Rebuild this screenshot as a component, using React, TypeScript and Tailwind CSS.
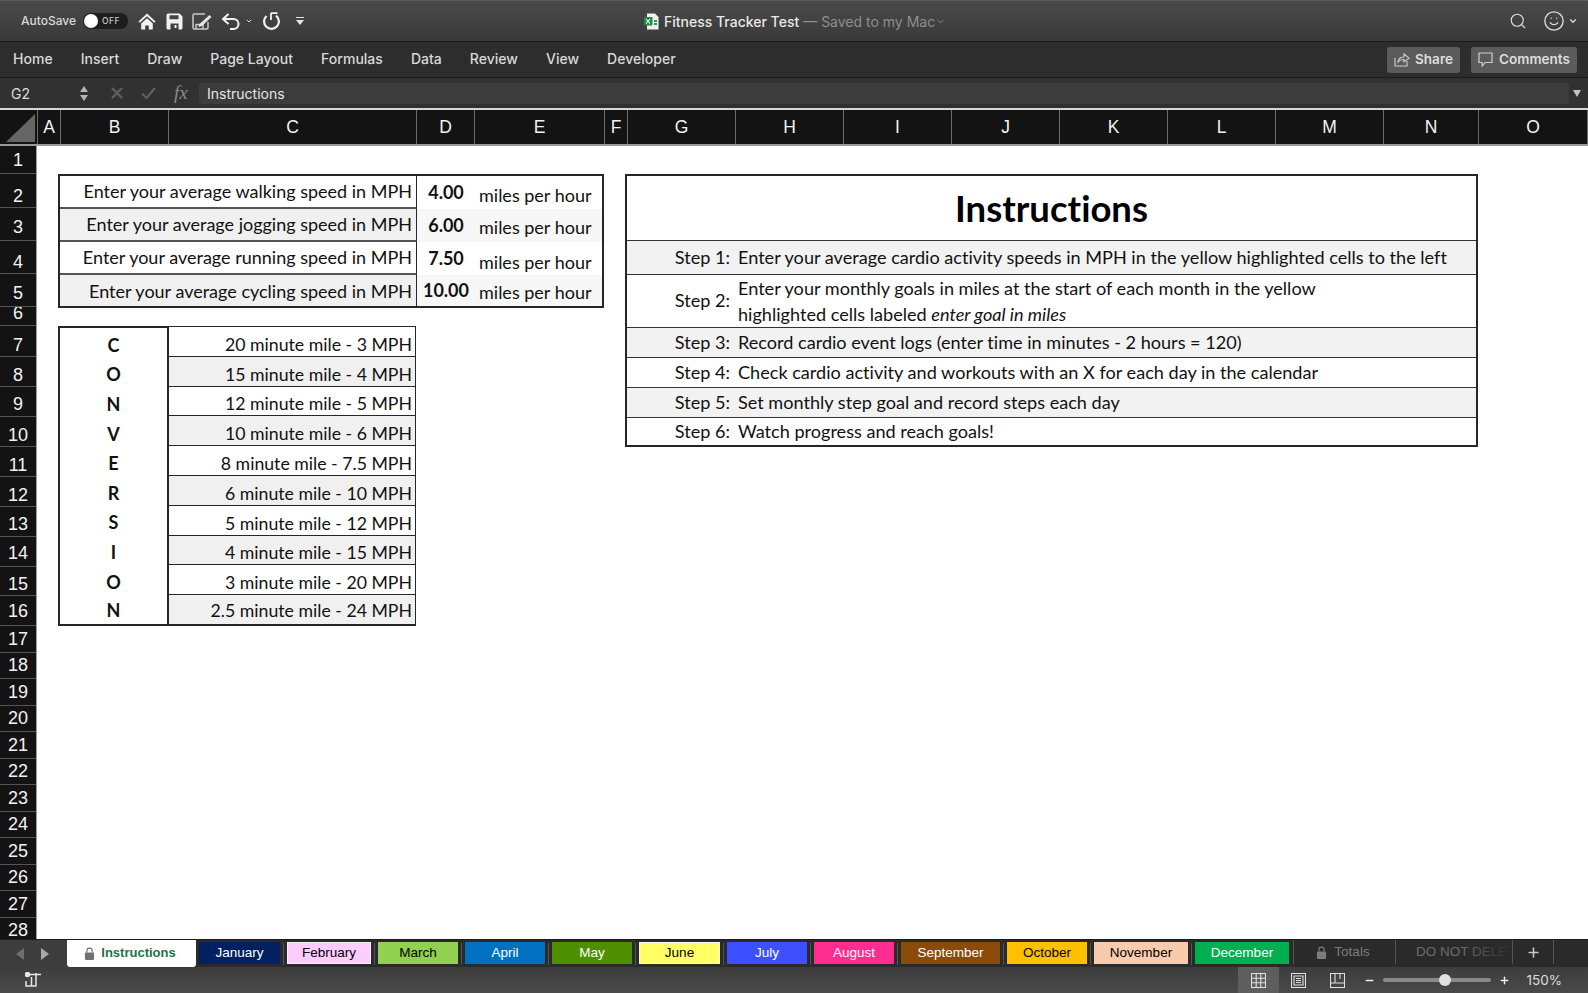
import { Search, Smile, ChevronDown, Plus, Minus } from 'lucide-react'

const cellFont = "font-['Lato','Liberation_Sans',sans-serif] [font-variant-ligatures:none]"
const uiFont = "font-['Inter','Liberation_Sans',sans-serif]"

const menus = ['Home', 'Insert', 'Draw', 'Page Layout', 'Formulas', 'Data', 'Review', 'View', 'Developer']

const columns = [
  { name: 'A', w: 'w-[23px]' },
  { name: 'B', w: 'w-[108px]' },
  { name: 'C', w: 'w-[248px]' },
  { name: 'D', w: 'w-[58px]' },
  { name: 'E', w: 'w-[130px]' },
  { name: 'F', w: 'w-[23px]' },
  { name: 'G', w: 'w-[108px]' },
  { name: 'H', w: 'w-[108px]' },
  { name: 'I', w: 'w-[108px]' },
  { name: 'J', w: 'w-[108px]' },
  { name: 'K', w: 'w-[108px]' },
  { name: 'L', w: 'w-[108px]' },
  { name: 'M', w: 'w-[108px]' },
  { name: 'N', w: 'w-[95px]' },
  { name: 'O', w: 'w-[109px]' },
]

const rows = [
  { n: 1, c: 'h-[28px] pt-[2px]' },
  { n: 2, c: 'h-[34px] pt-[12px]' },
  { n: 3, c: 'h-[33px] pt-[7px]' },
  { n: 4, c: 'h-[33px] pt-[10px]' },
  { n: 5, c: 'h-[33px] pt-[6px]' },
  { n: 6, c: 'h-[19px] pb-[6px]' },
  { n: 7, c: 'h-[31px] pt-[9px]' },
  { n: 8, c: 'h-[30px] pt-[7px]' },
  { n: 9, c: 'h-[30px] pt-[6px]' },
  { n: 10, c: 'h-[30px] pt-[7px]' },
  { n: 11, c: 'h-[30px] pt-[7px]' },
  { n: 12, c: 'h-[30px] pt-[7px]' },
  { n: 13, c: 'h-[30px] pt-[6px]' },
  { n: 14, c: 'h-[30px] pt-[4px]' },
  { n: 15, c: 'h-[29px] pt-[7px]' },
  { n: 16, c: 'h-[30px] pt-[2px]' },
  { n: 17, c: 'h-[27px]' },
  { n: 18, c: 'h-[26px]' },
  { n: 19, c: 'h-[27px]' },
  { n: 20, c: 'h-[26px]' },
  { n: 21, c: 'h-[27px]' },
  { n: 22, c: 'h-[26px]' },
  { n: 23, c: 'h-[27px]' },
  { n: 24, c: 'h-[26px]' },
  { n: 25, c: 'h-[27px]' },
  { n: 26, c: 'h-[26px]' },
  { n: 27, c: 'h-[27px]' },
  { n: 28, c: 'h-[26px]' },
]

const speeds = [
  { label: 'Enter your average walking speed in MPH', value: '4.00', h: 'h-[33px]', lift: 'pb-[1px]', unit: 'pt-[6px]', grey: false },
  { label: 'Enter your average jogging speed in MPH', value: '6.00', h: 'h-[33px]', lift: 'pb-[0px]', unit: 'pt-[4px]', grey: true },
  { label: 'Enter your average running speed in MPH', value: '7.50', h: 'h-[33px]', lift: 'pb-[0px]', unit: 'pt-[7px]', grey: false },
  { label: 'Enter your average cycling speed in MPH', value: '10.00', h: 'h-[31px]', lift: 'pt-[1px]', unit: 'pt-[4px]', grey: true },
]

const letters = ['C', 'O', 'N', 'V', 'E', 'R', 'S', 'I', 'O', 'N']
const paces = [
  '20 minute mile - 3 MPH',
  '15 minute mile - 4 MPH',
  '12 minute mile - 5 MPH',
  '10 minute mile - 6 MPH',
  '8 minute mile - 7.5 MPH',
  '6 minute mile - 10 MPH',
  '5 minute mile - 12 MPH',
  '4 minute mile - 15 MPH',
  '3 minute mile - 20 MPH',
  '2.5 minute mile - 24 MPH',
]

const tabs = [
  { name: 'January', c: 'w-[81px] bg-[#002060] text-white' },
  { name: 'February', c: 'w-[84px] bg-[#ffccff] text-black border border-[#f4f4f4]' },
  { name: 'March', c: 'w-[80px] bg-[#92d050] text-black' },
  { name: 'April', c: 'w-[80px] bg-[#0070c0] text-white' },
  { name: 'May', c: 'w-[80px] bg-[#4e8f00] text-white' },
  { name: 'June', c: 'w-[81px] bg-[#ffff66] text-black border border-[#f4f4f4]' },
  { name: 'July', c: 'w-[80px] bg-[#3d4fff] text-white' },
  { name: 'August', c: 'w-[80px] bg-[#ff2d8f] text-white' },
  { name: 'September', c: 'w-[99px] bg-[#8a4b08] text-white' },
  { name: 'October', c: 'w-[80px] bg-[#ffc000] text-black' },
  { name: 'November', c: 'w-[94px] bg-[#f8cbad] text-black' },
  { name: 'December', c: 'w-[94px] bg-[#00b050] text-white' },
]

function Lock({ className }: { className: string }) {
  return (
    <svg viewBox="0 0 12 14" className={className} fill="currentColor">
      <path d="M2.5 6V4a3.5 3.5 0 0 1 7 0v2H8.2V4a2.2 2.2 0 0 0-4.4 0v2z" />
      <rect x="1" y="6" width="10" height="8" rx="1.2" />
    </svg>
  )
}

function QuickAccess() {
  return (
    <div className="ml-[10px] flex items-center text-[#f2f2f2]">
      <svg viewBox="0 0 18 17" className="h-[17px] w-[18px]" fill="currentColor">
        <path d="M9 0.5 0.5 8.4l1.3 1.4L9 3.2l7.2 6.6 1.3-1.4zM9 5.2 3.2 10.5V16.5h4v-4h3.6v4h4v-6z" />
      </svg>
      <svg viewBox="0 0 17 17" className="ml-[10px] h-[17px] w-[17px]" fill="currentColor">
        <path fillRule="evenodd" d="M2 .5h11.5L16.5 3.5V15a1.5 1.5 0 0 1-1.5 1.5H2A1.5 1.5 0 0 1 .5 15V2A1.5 1.5 0 0 1 2 .5zM3.5 2.3v4h9v-4zM4.5 10.5v6h8v-6zM8.5 12h2v3h-2z" />
      </svg>
      <svg viewBox="0 0 21 17" className="ml-[9px] h-[17px] w-[21px]" fill="none" stroke="#c9c9c9" strokeWidth="1.5">
        <path d="M13 1H2.2A1.2 1.2 0 0 0 1 2.2v12.6A1.2 1.2 0 0 0 2.2 16h12.6a1.2 1.2 0 0 0 1.2-1.2V9" />
        <path d="M4 16v-4.5h7V16" />
        <path d="M7 11.5 17.5 2l2 2L10 13l-3.5 1z" fill="#e6e6e6" stroke="none" />
      </svg>
      <svg viewBox="0 0 20 17" className="ml-[8px] h-[17px] w-[20px]" fill="none" stroke="currentColor" strokeWidth="2">
        <path d="M7.5 1 2 6l5.5 5" />
        <path d="M2 6h10.5a5 5 0 0 1 0 10H9" />
      </svg>
      <ChevronDown className="ml-[4px] h-[8px] w-[8px] text-[#dddddd]" strokeWidth={3} />
      <svg viewBox="0 0 18 18" className="ml-[9px] h-[18px] w-[18px]" fill="none" stroke="currentColor" strokeWidth="2.2">
        <path d="M4.5 4A7.4 7.4 0 1 0 14 3.6" />
        <path d="M9 1v7M9 1.2h6.5" strokeWidth="1.8" />
      </svg>
      <div className="ml-[16px] flex flex-col items-center gap-[2px]">
        <div className="h-[1.5px] w-[8px] bg-[#e6e6e6]" />
        <div className="h-0 w-0 border-x-[4.5px] border-t-[5px] border-x-transparent border-t-[#e6e6e6]" />
      </div>
    </div>
  )
}

function TitleBar() {
  return (
    <div className={`relative flex h-[42px] shrink-0 items-center border-t border-b border-t-[#5c5c5c] border-b-[#1c1c1c] bg-gradient-to-b from-[#4a4a4a] to-[#393939] pl-[21px] ${uiFont}`}>
      <span className="text-[12px] font-medium text-[#d8d8d8]">AutoSave</span>
      <div className="ml-[7px] flex h-[16px] w-[45px] items-center rounded-full bg-[#1d1d1d] pl-[1px]">
        <div className="h-[14px] w-[14px] rounded-full bg-white" />
        <span className="ml-[4px] text-[8.5px] font-medium tracking-[0.5px] text-[#c8c8c8]">OFF</span>
      </div>
      <QuickAccess />
      <div className="absolute left-[644px] top-[10px] flex items-center">
        <svg viewBox="0 0 15 17" className="h-[17px] w-[15px]">
          <path d="M3 .5h8l3.5 3.5v12.5H3z" fill="#f1f1f1" />
          <rect x="0" y="4" width="8.5" height="8.5" rx="1" fill="#1e8a4c" />
          <path d="M2 6l4 4.5M6 6l-4 4.5" stroke="#fff" strokeWidth="1.1" />
          <rect x="10" y="7" width="3" height="2" fill="#2d9a5c" />
          <rect x="10" y="10" width="3" height="2" fill="#2d9a5c" />
        </svg>
        <span className="ml-[5px] text-[14px] font-medium text-[#e8e8e8]">Fitness Tracker Test</span>
        <span className="ml-[4px] text-[14px] text-[#8e8e8e]">— Saved to my Mac</span>
        <ChevronDown className="h-[11px] w-[11px] text-[#8e8e8e]" />
      </div>
      <div className="ml-auto flex items-center pr-[10px] text-[#dcdcdc]">
        <Search className="h-[18px] w-[18px]" strokeWidth={1.5} />
        <Smile className="ml-[16px] h-[22px] w-[22px]" strokeWidth={1.5} />
        <ChevronDown className="ml-[3px] h-[10px] w-[10px]" strokeWidth={3} />
      </div>
    </div>
  )
}

function MenuBar() {
  return (
    <div className={`flex h-[36px] shrink-0 items-center border-b border-[#1a1a1a] bg-[#2d2d2d] pl-[13px] pr-[11px] ${uiFont}`}>
      <div className="flex gap-[28px] pb-[2px] text-[14px] font-medium tracking-[0.02px] text-[#d9d9d9]">
        {menus.map((m) => (
          <span key={m}>{m}</span>
        ))}
      </div>
      <div className="ml-auto flex gap-[11px] text-[13.5px] font-semibold text-[#dedede]">
        <div className="flex h-[26px] w-[73px] items-center justify-center gap-[5px] rounded-[3px] bg-[#5b5b5b]">
          <svg viewBox="0 0 16 15" className="h-[15px] w-[16px]" fill="none" stroke="#cfcfcf" strokeWidth="1.1">
            <path d="M1 6v8h12V9" />
            <path d="M4 10c.5-3.5 3-5 6-5V2l5 4.2L10 10V7.5c-2.5 0-4.5.7-6 2.5z" />
          </svg>
          Share
        </div>
        <div className="flex h-[26px] w-[106px] items-center justify-center gap-[6px] rounded-[3px] bg-[#5b5b5b]">
          <svg viewBox="0 0 15 15" className="h-[15px] w-[15px]" fill="none" stroke="#cfcfcf" strokeWidth="1.2">
            <path d="M1 1h13v9.5H7L4.2 14v-3.5H1z" />
          </svg>
          Comments
        </div>
      </div>
    </div>
  )
}

function FormulaBar() {
  return (
    <div className={`flex h-[30px] shrink-0 items-center bg-[#313131] ${uiFont}`}>
      <span className="ml-[11px] w-[69px] text-[14px] text-[#dcdcdc]">G2</span>
      <div className="flex flex-col items-center gap-[3px]">
        <div className="h-0 w-0 border-x-[4px] border-b-[6px] border-x-transparent border-b-[#b5b5b5]" />
        <div className="h-0 w-0 border-x-[4px] border-t-[6px] border-x-transparent border-t-[#b5b5b5]" />
      </div>
      <svg viewBox="0 0 12 12" className="ml-[23px] h-[12px] w-[12px]" stroke="#5f5f5f" strokeWidth="2.4">
        <path d="M1 1l10 10M11 1 1 11" />
      </svg>
      <svg viewBox="0 0 15 12" className="ml-[18px] h-[12px] w-[15px]" fill="none" stroke="#5f5f5f" strokeWidth="2.2">
        <path d="M1 6.5 5.5 11 14 1" />
      </svg>
      <span className="ml-[18px] w-[22px] font-['Liberation_Serif',serif] text-[19px] italic text-[#8a8a8a]">fx</span>
      <div className="ml-[3px] flex h-[21px] w-[1370px] items-center rounded-[2px] bg-[#3c3c3c] pl-[8px] text-[14px] text-[#e4e4e4]">
        Instructions
      </div>
      <div className="ml-[4px] h-0 w-0 border-x-[4px] border-t-[7px] border-x-transparent border-t-[#c4c4c4]" />
    </div>
  )
}

function ColumnHeaders() {
  return (
    <div className="flex h-[38px] shrink-0 border-t-[2px] border-b-[2px] border-t-[#d6d6d6] border-b-[#9a9a9a] bg-[#131313] font-['Liberation_Sans',sans-serif]">
      <div className="flex w-[38px] shrink-0 items-end justify-end border-r border-[#6a6a6a] pb-[2px] pr-[2px]">
        <svg viewBox="0 0 29 28" className="h-[28px] w-[29px]">
          <polygon points="0,28 29,0 29,28" fill="#666666" />
        </svg>
      </div>
      {columns.map((col) => (
        <div key={col.name} className={`flex shrink-0 items-center justify-center border-r border-[#6a6a6a] pt-[1px] text-[17.5px] text-[#f2f2f2] ${col.w}`}>
          {col.name}
        </div>
      ))}
    </div>
  )
}

function RowHeaders() {
  return (
    <div className="w-[37px] shrink-0 border-r border-[#9a9a9a] bg-[#131313] font-['Liberation_Sans',sans-serif]">
      {rows.map((r) => (
        <div key={r.n} className={`box-border flex items-center justify-center overflow-hidden border-b border-[#555555] text-[18px] text-[#f2f2f2] ${r.c}`}>
          {r.n}
        </div>
      ))}
    </div>
  )
}

function SpeedTable() {
  return (
    <div className="w-[546px] border-2 border-[#262626]">
      {speeds.map((s, i) => (
        <div key={s.label} className={`flex text-[18px] text-[#111111] ${s.h}`}>
          <div className={`flex w-[357px] items-center justify-end whitespace-nowrap border-r border-[#262626] pr-[4px] ${s.lift} ${s.grey ? 'bg-[#f0f0f0]' : ''} ${i < 3 ? 'border-b-2 border-b-[#555555]' : ''}`}>
            {s.label}
          </div>
          <div className={`flex w-[58px] items-center justify-center font-bold ${s.grey ? 'bg-[#f7f7f7]' : ''}`}>{s.value}</div>
          <div className={`flex flex-1 items-center whitespace-nowrap pl-[4px] ${s.unit} ${s.grey ? 'bg-[#f7f7f7]' : ''}`}>miles per hour</div>
        </div>
      ))}
    </div>
  )
}

function ConversionTable() {
  return (
    <div className="mt-[18px] flex h-[300px] w-[358px]">
      <div className="flex w-[111px] flex-col border-2 border-[#262626]">
        {letters.map((l, i) => (
          <div key={i} className="flex min-h-0 flex-1 items-center justify-center text-[18px] font-bold leading-[20px] text-[#111111]">
            <span className={i < 9 ? 'pt-[4px]' : 'pt-[2px]'}>{l}</span>
          </div>
        ))}
      </div>
      <div className="flex flex-1 flex-col border-y border-r border-[#262626] border-b-2">
        {paces.map((p, i) => (
          <div key={p} className={`flex min-h-0 flex-1 items-center justify-end whitespace-nowrap pr-[3px] text-[17.7px] leading-[20px] text-[#111111] ${i % 2 ? 'bg-[#f0f0f0]' : ''} ${i < 9 ? 'border-b border-[#262626]' : ''}`}>
            <span className={i < 9 ? 'pt-[7px]' : 'pt-[3px]'}>{p}</span>
          </div>
        ))}
      </div>
    </div>
  )
}

function StepRow({ step, grey, h, children }: { step: string; grey?: boolean; h: string; children: React.ReactNode }) {
  return (
    <div className={`flex items-center border-t border-[#333333] text-[18.1px] text-[#111111] ${h} ${grey ? 'bg-[#f2f2f2]' : ''}`}>
      <div className="w-[103px] whitespace-nowrap text-right">{step}</div>
      <div className="ml-[8px] flex-1">{children}</div>
    </div>
  )
}

function Instructions() {
  return (
    <div className="ml-[21px] h-[273px] w-[853px] border-2 border-[#262626]">
      <div className="flex h-[64px] items-center justify-center text-[36.5px] font-bold text-black">Instructions</div>
      <StepRow step="Step 1:" grey h="h-[34px]">
        Enter your average cardio activity speeds in MPH in the yellow highlighted cells to the left
      </StepRow>
      <StepRow step="Step 2:" h="h-[53px]">
        <div className="leading-[26px]">
          Enter your monthly goals in miles at the start of each month in the yellow
          <br />
          highlighted cells labeled <em>enter goal in miles</em>
        </div>
      </StepRow>
      <StepRow step="Step 3:" grey h="h-[30px]">
        Record cardio event logs (enter time in minutes - 2 hours = 120)
      </StepRow>
      <StepRow step="Step 4:" h="h-[30px]">
        Check cardio activity and workouts with an X for each day in the calendar
      </StepRow>
      <StepRow step="Step 5:" grey h="h-[30px]">
        Set monthly step goal and record steps each day
      </StepRow>
      <StepRow step="Step 6:" h="h-[29px]">
        Watch progress and reach goals!
      </StepRow>
    </div>
  )
}

function SheetTabs() {
  return (
    <div className="flex h-[28px] shrink-0 border-t border-[#1c1c1c] bg-[#2a2a2a] font-['Liberation_Sans',sans-serif] text-[13.5px]">
      <div className="flex w-[67px] items-center bg-[#3d3d3d] pl-[16px]">
        <div className="h-0 w-0 border-y-[6px] border-r-[8px] border-y-transparent border-r-[#6e6e6e]" />
        <div className="ml-[17px] h-0 w-0 border-y-[6px] border-l-[8px] border-y-transparent border-l-[#a8a8a8]" />
      </div>
      <div className="flex h-[27px] w-[129px] items-center justify-center gap-[6px] rounded-b-[3px] bg-white pb-[1px] pr-[3px] text-[13px] font-semibold text-[#217346]">
        <Lock className="h-[13px] w-[11px] text-[#707070]" />
        Instructions
      </div>
      <div className="w-[3px]" />
      {tabs.map((t, i) => (
        <div key={t.name} className="flex">
          {i > 0 && (
            <div className="flex w-[7px] items-center justify-center">
              <div className="h-[22px] w-px bg-[#555555]" />
            </div>
          )}
          <div className={`mt-[2px] box-border flex h-[22px] items-center justify-center ${t.c}`}>{t.name}</div>
        </div>
      ))}
      <div className="ml-[4px] flex h-[24px] w-[103px] items-center justify-center gap-[7px] border-x border-[#555555] pr-[3px] text-[#7c7c7c]">
        <Lock className="h-[13px] w-[11px]" />
        Totals
      </div>
      <div className="relative flex h-[24px] w-[116px] items-center overflow-hidden whitespace-nowrap pl-[20px] text-[#6c6c6c]">
        DO NOT DELETE
        <div className="absolute inset-y-0 right-0 w-[50px] bg-gradient-to-r from-transparent to-[#2a2a2a]" />
      </div>
      <div className="flex h-[24px] w-[42px] items-center justify-center border-x border-[#555555] text-[#c8c8c8]">
        <Plus className="h-[15px] w-[15px]" strokeWidth={2.5} />
      </div>
    </div>
  )
}

function StatusBar() {
  return (
    <div className={`flex h-[26px] shrink-0 items-center bg-gradient-to-b from-[#3d3d3d] to-[#4a4a4a] ${uiFont}`}>
      <svg viewBox="0 0 17 16" className="ml-[25px] h-[16px] w-[17px]" fill="none" stroke="#e6e6e6" strokeWidth="1.5">
        <circle cx="2.5" cy="2.5" r="2" fill="#e6e6e6" />
        <path d="M5 2.5h11M11 2.5v12M11 1v3M6.5 5v9M1 9v5h10" />
      </svg>
      <div className="ml-auto flex h-full w-[41px] items-center justify-center bg-[#5e5e5e]">
        <svg viewBox="0 0 15 15" className="h-[15px] w-[15px]" fill="none" stroke="#e0e0e0" strokeWidth="1.1">
          <path d="M.5.5h14v14H.5zM5.2.5v14M9.8.5v14M.5 5.2h14M.5 9.8h14" />
        </svg>
      </div>
      <svg viewBox="0 0 15 15" className="ml-[12px] h-[15px] w-[15px]" fill="none" stroke="#e0e0e0" strokeWidth="1.1">
        <path d="M.5.5h14v14H.5zM3 3h9v9H3zM5 5.5h5M5 7.5h5M5 9.5h5" />
      </svg>
      <svg viewBox="0 0 15 15" className="ml-[24px] h-[15px] w-[15px]" fill="none" stroke="#e0e0e0" strokeWidth="1.1">
        <path d="M.5.5h14v14H.5zM.5 10h14M5 .5V10M10 .5V6" />
      </svg>
      <Minus className="ml-[19px] h-[11px] w-[11px] text-[#eeeeee]" strokeWidth={3} />
      <div className="relative ml-[8px] h-[4px] w-[108px] rounded-full bg-[#8a8a8a]">
        <div className="absolute left-[56px] top-[-4px] h-[12px] w-[12px] rounded-full bg-[#e0e0e0]" />
      </div>
      <Plus className="ml-[8px] h-[11px] w-[11px] text-[#eeeeee]" strokeWidth={3} />
      <span className="ml-[17px] mr-[26px] text-[13.5px] text-[#dcdcdc]">150%</span>
    </div>
  )
}

export default function App() {
  return (
    <div className="flex h-screen w-full flex-col overflow-hidden bg-white">
      <TitleBar />
      <MenuBar />
      <FormulaBar />
      <ColumnHeaders />
      <div className="flex min-h-0 flex-1 overflow-hidden">
        <RowHeaders />
        <div className={`flex flex-1 items-start pl-[21px] pt-[28px] ${cellFont}`}>
          <div>
            <SpeedTable />
            <ConversionTable />
          </div>
          <Instructions />
        </div>
      </div>
      <SheetTabs />
      <StatusBar />
    </div>
  )
}
